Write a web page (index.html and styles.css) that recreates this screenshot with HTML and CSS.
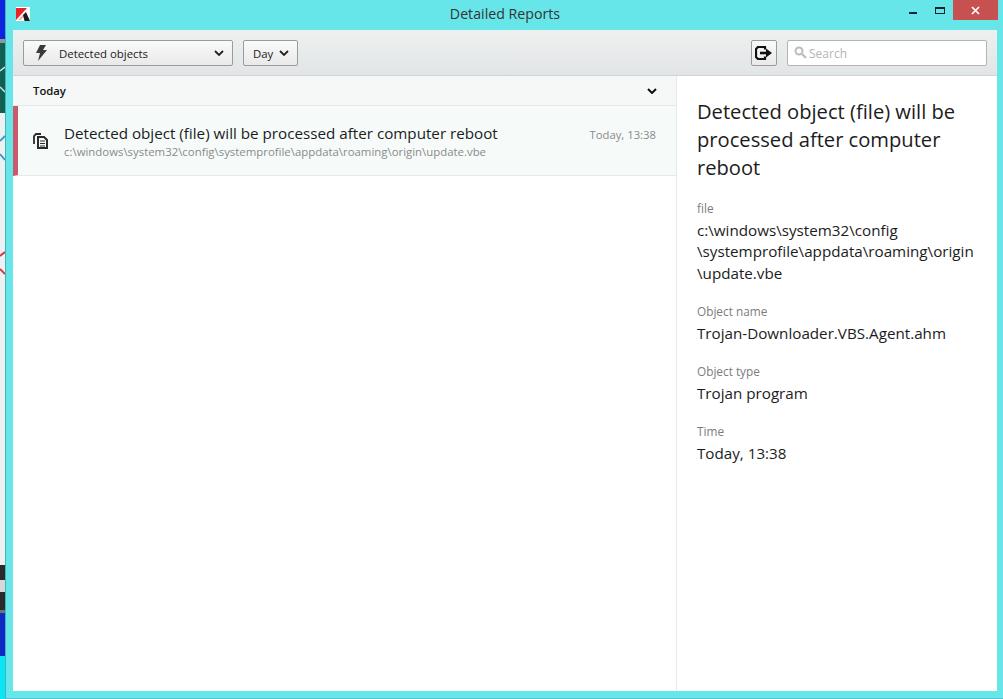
FILE: index.html
```html
<!DOCTYPE html>
<html lang="en">
<head>
<meta charset="utf-8">
<title>Detailed Reports</title>
<link rel="stylesheet" href="styles.css">
</head>
<body>
<div class="desktop">
  <svg class="strip" viewBox="0 0 5 699" width="5" height="699">
    <rect width="5" height="39" fill="#0f22e0"/>
    <rect y="39" width="5" height="4" fill="#8f9a98"/>
    <rect y="43" width="5" height="70" fill="#135f52"/>
    <path d="M0 71l5-4M0 87l5 5" stroke="#cfe5de" stroke-width="1.500"/>
    <rect y="113" width="5" height="452" fill="#eef1f1"/>
    <path d="M0 141l5-5M0 154l5 6" stroke="#3c93c4" stroke-width="1.800"/>
    <path d="M0 256l5-4M0 269l5 5" stroke="#dc2f3c" stroke-width="1.800"/>
    <rect y="565" width="5" height="45" fill="#2b2b2b"/>
    <rect y="580" width="5" height="12" fill="#d8d8d8"/>
    <rect y="610" width="5" height="3" fill="#6f7472"/>
    <rect y="613" width="5" height="43" fill="#1029c4"/>
    <rect y="656" width="5" height="43" fill="#0be4f5"/>
  </svg>
  <div class="window">
    <header class="titlebar">
      <svg class="logo" viewBox="0 0 14 14" width="14" height="14"><rect width="14" height="14" fill="#fff"/><path d="M0 1h11L0 13z" fill="#ec2228"/><path d="M2 13l4.500-5L8 9.500 5 13z" fill="#f2b5b5"/><path d="M7 8l3-3 4 9H8.500z" fill="#1c1c1c"/></svg>
      <div class="wintitle">Detailed Reports</div>
      <div class="controls">
        <div class="ctl"><span class="min"></span></div>
        <div class="ctl"><span class="max"></span></div>
        <div class="close"><svg viewBox="0 0 9 9" width="9" height="9"><path d="M1 1l7 7M8 1L1 8" stroke="#fff" stroke-width="1.700"/></svg></div>
      </div>
    </header>
    <div class="client">
      <div class="toolbar">
        <button class="btn btn-select">
          <svg class="bolt" viewBox="0 0 12 16" width="12" height="16"><path d="M5 0h6L8 5h4L3 16l2-8H1z" fill="#3a3a3a"/></svg>
          <span class="btn-label">Detected objects</span>
          <svg class="chev" viewBox="0 0 10 6" width="10" height="6"><path d="M1 1l4 4 4-4" fill="none" stroke="#222" stroke-width="1.800"/></svg>
        </button>
        <button class="btn btn-day">
          <span class="day-label">Day</span>
          <svg class="chev" viewBox="0 0 10 6" width="10" height="6"><path d="M1 1l4 4 4-4" fill="none" stroke="#222" stroke-width="1.800"/></svg>
        </button>
        <div class="spacer"></div>
        <button class="btn btn-export">
          <svg viewBox="0 0 18 14" width="18" height="14"><path d="M10 3.500V1H3L1 3v8l2 2h7v-2.500" fill="none" stroke="#111" stroke-width="2.200"/><path d="M5 7h7" stroke="#111" stroke-width="2.600"/><path d="M11 2.500L17 7l-6 4.500z" fill="#111"/></svg>
        </button>
        <label class="search">
          <svg viewBox="0 0 13 13" width="13" height="13"><circle cx="5" cy="5" r="3.500" fill="none" stroke="#bcbcbc" stroke-width="2"/><path d="M8 8l4 4" stroke="#bcbcbc" stroke-width="2.200"/></svg>
          <span class="search-label">Search</span>
        </label>
      </div>
      <div class="panes">
        <section class="list">
          <div class="group"><span>Today</span><svg viewBox="0 0 10 6" width="10" height="6"><path d="M1 1l4 4 4-4" fill="none" stroke="#111" stroke-width="2"/></svg></div>
          <article class="row">
            <svg class="doc" viewBox="0 0 15 16" width="15" height="16"><path d="M1 11V3l2-2h5" fill="none" stroke="#2b2b2b" stroke-width="1.800"/><path d="M5 4h6l3 3v8H5z" fill="none" stroke="#2b2b2b" stroke-width="2"/><path d="M7 8h5M7 10.500h5M7 13h5" stroke="#2b2b2b"/></svg>
            <div class="row-main">
              <div class="row-title">Detected object (file) will be processed after computer reboot</div>
              <div class="row-path">c:\windows\system32\config\systemprofile\appdata\roaming\origin\update.vbe</div>
            </div>
            <div class="row-time">Today, 13:38</div>
          </article>
        </section>
        <aside class="detail">
          <h1>Detected object (file) will be processed after computer reboot</h1>
          <dl>
            <dt>file</dt>
            <dd>c:\windows\system32\config<br>\systemprofile\appdata\roaming\origin<br>\update.vbe</dd>
            <dt>Object name</dt>
            <dd>Trojan-Downloader.VBS.Agent.ahm</dd>
            <dt>Object type</dt>
            <dd>Trojan program</dd>
            <dt>Time</dt>
            <dd>Today, 13:38</dd>
          </dl>
        </aside>
      </div>
    </div>
  </div>
</div>
</body>
</html>
```
FILE: styles.css
```css
* { box-sizing: border-box; }
html, body { margin: 0; padding: 0; height: 100%; overflow: hidden; }
body { font-family: "Open Sans", "Noto Sans", sans-serif; color: #1c1c1c; }
.desktop { display: flex; width: 1003px; height: 699px; }
.strip { width: 5px; height: 699px; display: block; flex: none; }
.window { flex: 1; display: flex; flex-direction: column; background: #67e6ea; padding: 0 6px 7px 7px; border-left: 1px solid #3fb6bd; border-bottom: 1px solid #4fc4ca; }
.titlebar { height: 30px; display: flex; align-items: flex-start; position: relative; flex: none; }
.logo { margin: 7px 0 0 3px; }
.wintitle { position: absolute; left: 0; right: 0; top: 5px; text-align: center; font-size: 14.200px; line-height: 18px; color: #333; }
.controls { margin-left: auto; display: flex; margin-right: -1px; position: relative; }
.ctl { width: 27px; height: 20px; display: flex; align-items: center; justify-content: center; }
.min { width: 8px; height: 2px; background: #123; margin-top: 6px; }
.max { width: 10px; height: 7px; border: 1px solid #123; border-top-width: 2px; }
.close { width: 45px; height: 20px; background: #c75050; display: flex; align-items: center; justify-content: center; }
.client { flex: 1; display: flex; flex-direction: column; background: #fff; min-height: 0; }
.toolbar { height: 46px; flex: none; display: flex; align-items: center; padding: 0 10px; background: linear-gradient(#eef0f0, #e2e5e6); border-bottom: 1px solid #cfd3d4; }
.btn { height: 26px; margin: 0; padding: 0; display: flex; align-items: center; border: 1px solid #9b9b9b; border-radius: 2px; background: linear-gradient(#fafafa, #e9e9e9); font: inherit; font-size: 11.400px; color: #222; }
.btn-select { width: 210px; padding: 0 8px 0 11px; }
.btn-label { margin-left: 12px; flex: 1; text-align: left; padding-top: 1px; }
.btn-day { width: 55px; margin-left: 10px; padding: 0 8px 0 9px; justify-content: space-between; }
.day-label { padding-top: 1px; }
.spacer { flex: 1; }
.btn-export { width: 26px; justify-content: center; }
.search { width: 200px; height: 26px; margin-left: 10px; display: flex; align-items: center; gap: 2px; padding: 0 6px; background: #fff; border: 1px solid #b4b4b4; border-radius: 2px; font-size: 12px; color: #b5b5b5; }
.search-label { padding-top: 1px; }
.panes { flex: 1; display: flex; min-height: 0; }
.list { width: 664px; flex: none; border-right: 1px solid #e6e9e9; }
.group { height: 30px; display: flex; align-items: center; justify-content: space-between; padding: 0 19px 0 20px; background: #f6f8f8; border-bottom: 1px solid #e6e9e9; font-size: 11.300px; font-weight: 600; color: #111; }
.row { height: 70px; display: flex; align-items: flex-start; background: #f6fbfa; border-left: 5px solid #c95a6c; border-bottom: 1px solid #e6e9e9; }
.doc { margin: 27px 0 0 15px; flex: none; }
.row-main { margin-left: 16px; flex: 1; min-width: 0; padding-top: 17px; }
.row-title { font-size: 15.200px; line-height: 20px; color: #1c1c1c; }
.row-path { font-size: 11.400px; line-height: 16px; margin-top: 1px; color: #8a8a8a; }
.row-time { padding: 21px 20px 0 0; font-size: 11.300px; line-height: 16px; color: #8a8a8a; }
.detail { flex: 1; padding: 22px 20px 0 20px; }
.detail h1 { margin: 0; font-size: 20.150px; line-height: 27.800px; font-weight: 400; color: #1c1c1c; }
dl { margin: 19px 0 0; }
dt { font-size: 11.800px; line-height: 16px; color: #7c7c7c; }
dd { margin: 3.500px 0 19px; font-size: 15.200px; line-height: 21.500px; color: #1c1c1c; }
```
